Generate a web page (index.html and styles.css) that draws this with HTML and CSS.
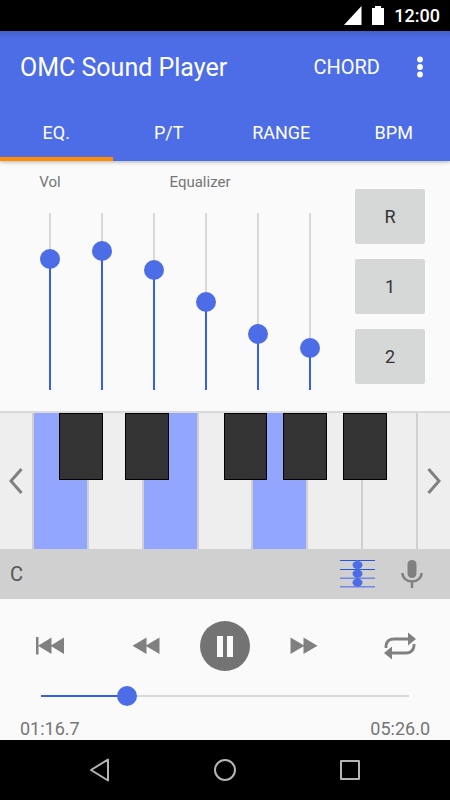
FILE: index.html
```html
<!DOCTYPE html>
<html lang="en">
<head>
<meta charset="utf-8">
<meta name="viewport" content="width=device-width, initial-scale=1">
<title>OMC Sound Player</title>
<link rel="stylesheet" href="styles.css">
</head>
<body>
<div class="status">
  <svg width="18" height="20" viewBox="0 0 18 20" aria-hidden="true"><path d="M17.500 1v19H0z" fill="#fff"/></svg>
  <svg width="12" height="20" viewBox="0 0 12 20" aria-hidden="true"><path d="M3 1h6v2h3v17H0V3h3z" fill="#fff"/></svg>
  <time>12:00</time>
</div>
<header class="app-bar">
  <div class="toolbar">
    <h1>OMC Sound Player</h1>
    <button class="chord" type="button">CHORD</button>
    <button class="more" type="button" aria-label="More options">
      <svg width="8" height="22" viewBox="0 0 8 22"><g fill="#fff"><circle cx="4" cy="3.500" r="2.900"/><circle cx="4" cy="11" r="2.900"/><circle cx="4" cy="18.500" r="2.900"/></g></svg>
    </button>
  </div>
  <nav class="tabs">
    <button class="tab active" type="button">EQ.</button>
    <button class="tab" type="button">P/T</button>
    <button class="tab" type="button">RANGE</button>
    <button class="tab" type="button">BPM</button>
  </nav>
</header>
<main>
  <section class="equalizer">
    <div class="mixer">
      <label class="vol-label" for="vol">Vol</label>
      <span class="eq-label" id="eq">Equalizer</span>
      <input class="range vertical" id="vol" type="range" min="0" max="1000" value="743" style="--fill:74.3%">
      <input class="range vertical" aria-label="Equalizer band 1" type="range" min="0" max="1000" value="788" style="--fill:78.8%">
      <input class="range vertical" aria-label="Equalizer band 2" type="range" min="0" max="1000" value="678" style="--fill:67.8%">
      <input class="range vertical" aria-label="Equalizer band 3" type="range" min="0" max="1000" value="498" style="--fill:49.8%">
      <input class="range vertical" aria-label="Equalizer band 4" type="range" min="0" max="1000" value="314" style="--fill:31.4%">
      <input class="range vertical" aria-label="Equalizer band 5" type="range" min="0" max="1000" value="237" style="--fill:23.7%">
    </div>
    <div class="presets">
      <button type="button">R</button>
      <button type="button">1</button>
      <button type="button">2</button>
    </div>
  </section>
  <section class="keyboard">
    <button class="shift" type="button" aria-label="Lower octave">
      <svg width="16" height="28" viewBox="0 0 16 28"><path d="M13.500 2L3 14l10.500 12" fill="none" stroke="#808080" stroke-width="3"/></svg>
    </button>
    <div class="keys">
      <button class="white on" type="button" aria-label="C"></button>
      <button class="white" type="button" aria-label="D"></button>
      <button class="white on" type="button" aria-label="E"></button>
      <button class="white" type="button" aria-label="F"></button>
      <button class="white on" type="button" aria-label="G"></button>
      <button class="white" type="button" aria-label="A"></button>
      <button class="white" type="button" aria-label="B"></button>
      <button class="black c-sharp" type="button" aria-label="C sharp"></button>
      <button class="black d-sharp" type="button" aria-label="D sharp"></button>
      <button class="black f-sharp" type="button" aria-label="F sharp"></button>
      <button class="black g-sharp" type="button" aria-label="G sharp"></button>
      <button class="black a-sharp" type="button" aria-label="A sharp"></button>
    </div>
    <button class="shift next" type="button" aria-label="Higher octave">
      <svg width="16" height="28" viewBox="0 0 16 28"><path d="M2.500 2L13 14 2.500 26" fill="none" stroke="#808080" stroke-width="3"/></svg>
    </button>
  </section>
  <section class="chord-bar">
    <span class="chord-name">C</span>
    <button type="button" aria-label="Show chord notes">
      <svg width="35" height="30" viewBox="0 0 35 30"><g fill="#2456e0"><path d="M0 1h35v1H0zM0 10h35v1H0z"/><path d="M0 18.500h35v1.500H0zM0 27h35v1.500H0z" fill="#6f86ea"/></g><g fill="#4d6de6"><path d="M16.500 1h2v27h-2z"/><ellipse cx="17.500" cy="6" rx="5" ry="4"/><ellipse cx="17.500" cy="14.700" rx="5" ry="4"/><ellipse cx="17.500" cy="23.500" rx="5" ry="4"/></g></svg>
    </button>
    <button type="button" aria-label="Microphone">
      <svg width="22" height="30" viewBox="0 0 22 30"><rect x="6.500" y="1" width="9" height="18" rx="4.500" fill="#808080"/><path d="M1.500 14c0 5 4 8.500 9.500 8.500s9.500-3.500 9.500-8.500M11 22.500V29" fill="none" stroke="#808080" stroke-width="2.500"/></svg>
    </button>
  </section>
  <section class="transport">
    <div class="controls">
      <button type="button" aria-label="Previous track">
        <svg width="28" height="18" viewBox="0 0 28 18"><path d="M0 0h2.500v17.500H0zM15.500.5v16.500L2 8.700zM28 .5v16.500L14.500 8.700z" fill="#808080"/></svg>
      </button>
      <div class="play-group">
        <button type="button" aria-label="Rewind">
          <svg width="28" height="18" viewBox="0 0 28 18"><path d="M14.500.5v16.500L.5 8.700zM27.500.5v16.500L13.500 8.700z" fill="#808080"/></svg>
        </button>
        <button type="button" aria-label="Pause">
          <svg width="50" height="50" viewBox="0 0 50 50"><circle cx="25" cy="25" r="25" fill="#737373"/><path d="M17 15h6v21h-6zM27 15h6v21h-6z" fill="#fafafa"/></svg>
        </button>
        <button type="button" aria-label="Fast forward">
          <svg width="28" height="18" viewBox="0 0 28 18"><path d="M.5.5v16.500L14.500 8.700zM13.500.5v16.500L27.500 8.700z" fill="#808080"/></svg>
        </button>
      </div>
      <button type="button" aria-label="Repeat">
        <svg width="32" height="28" viewBox="0 0 32 28"><g fill="none" stroke="#808080" stroke-width="2.800"><path d="M2 16v-2.500Q3 7 10 7h15"/><path d="M30 12V14q-1 7-8 7H7"/></g><path d="M24 .5L32 7l-8 6.500zM8 14.500v13L0 21z" fill="#808080"/></svg>
      </button>
    </div>
    <input class="range seek" type="range" min="0" max="1000" value="234" aria-label="Playback position" style="--fill:23.4%">
    <div class="times"><time>01:16.7</time><time>05:26.0</time></div>
  </section>
</main>
<footer class="system-nav">
  <button type="button" aria-label="Back"><svg width="24" height="24" viewBox="0 0 24 24"><path d="M20 1.500v21L3 12z" fill="none" stroke="#b5b5b5" stroke-width="2" stroke-linejoin="round"/></svg></button>
  <button type="button" aria-label="Home"><svg width="24" height="24" viewBox="0 0 24 24"><circle cx="12" cy="12" r="10" fill="none" stroke="#b5b5b5" stroke-width="2"/></svg></button>
  <button type="button" aria-label="Recent apps"><svg width="24" height="24" viewBox="0 0 24 24"><path d="M3 3h18v18H3z" fill="none" stroke="#b5b5b5" stroke-width="2" stroke-linejoin="round"/></svg></button>
</footer>
</body>
</html>
```
FILE: styles.css
```css
:root {
  --accent: #4d6de6;
  --track: #d9d9d9;
  --surface: #fafafa;
}

* {
  box-sizing: border-box;
}

body {
  margin: 0;
  min-height: 100vh;
  display: flex;
  flex-direction: column;
  background: var(--surface);
  font-family: Roboto, sans-serif;
  font-size: 18px;
  color: #757575;
}

button {
  display: flex;
  align-items: center;
  justify-content: center;
  margin: 0;
  padding: 0;
  border: 0;
  background: none;
  color: inherit;
  font: inherit;
}

svg {
  display: block;
}

.status {
  display: flex;
  align-items: center;
  justify-content: flex-end;
  gap: 10px;
  height: 31px;
  padding-right: 10px;
  background: #000;
  color: #fff;
  font-weight: 500;
}

.status svg {
  margin-bottom: 2px;
}

.app-bar {
  position: relative;
  background: linear-gradient(#445fc9, var(--accent) 8px);
  color: #fff;
  box-shadow: 0 1px 4px rgba(0, 0, 0, 0.3);
}

.toolbar {
  display: flex;
  align-items: center;
  height: 72px;
  padding: 0 16px 0 20px;
}

h1 {
  flex: 1;
  margin: 0;
  font-size: 25px;
  font-weight: 400;
}

.chord {
  font-size: 20px;
}

.more {
  width: 28px;
  height: 40px;
  margin-left: 26px;
}

.tabs {
  display: grid;
  grid-template-columns: repeat(4, 1fr);
}

.tab {
  height: 58px;
  border: solid transparent;
  border-width: 4px 0;
}

.tab.active {
  border-bottom-color: #ff8c00;
}

main {
  flex: 1;
}

.equalizer {
  display: flex;
  gap: 19px;
  padding: 11px 25px 11px 24px;
}

.mixer {
  flex: 1;
  display: grid;
  grid-template-columns: repeat(6, 1fr);
  row-gap: 11px;
  justify-items: center;
  font-size: 15px;
  line-height: 20px;
}

.eq-label {
  grid-column: 2 / -1;
  padding-right: 12px;
}

.range {
  appearance: none;
  margin: 0;
  background-color: transparent;
  background-repeat: no-repeat;
  background-position: center;
}

.range::-webkit-slider-thumb {
  appearance: none;
  width: 20px;
  height: 20px;
  border: 0;
  border-radius: 50%;
  background: var(--accent);
}

.vertical {
  writing-mode: vertical-lr;
  direction: rtl;
  width: 20px;
  height: 197px;
  background-image: linear-gradient(to top, #3560e6 var(--fill), var(--track) 0);
  background-size: 2px calc(100% - 20px);
}

.presets {
  display: flex;
  flex-direction: column;
  gap: 15px;
  width: 70px;
  padding-top: 17px;
}

.presets button {
  height: 55px;
  border-radius: 2px;
  background: #d6d7d7;
  color: #333;
}

.keyboard {
  display: flex;
  height: 138px;
  border-top: 2px solid #dadada;
  background: #eee;
}

.shift {
  width: 32px;
}

.next {
  width: 34px;
  border-left: 2px solid #d0d0d0;
}

.keys {
  position: relative;
  flex: 1;
  display: flex;
}

.white {
  flex: 1;
  border-left: 2px solid #d0d0d0;
}

.on {
  background: #92a6ff;
}

.black {
  position: absolute;
  top: 0;
  width: 11.4%;
  height: 67px;
  border: 1px solid #000;
  background: #333;
}

.c-sharp { left: 7%; }
.d-sharp { left: 24.2%; }
.f-sharp { left: 49.9%; }
.g-sharp { left: 65.4%; }
.a-sharp { left: 81%; }

.chord-bar {
  display: flex;
  align-items: center;
  gap: 26px;
  height: 50px;
  padding: 0 27px 0 10px;
  background: #d0d0d0;
}

.chord-name {
  flex: 1;
  color: #555;
  font-size: 20px;
}

.transport {
  padding: 22px 20px 0;
}

.controls {
  display: flex;
  justify-content: space-between;
}

.controls button {
  width: 60px;
  height: 50px;
}

.play-group {
  display: flex;
  gap: 19px;
}

.seek {
  display: block;
  width: calc(100% - 22px);
  height: 20px;
  margin: 15px 11px 13px;
  background-image: linear-gradient(to right, #3560e6 var(--fill), var(--track) 0);
  background-size: calc(100% - 20px) 2px;
}

.times {
  display: flex;
  justify-content: space-between;
  line-height: 20px;
}

.system-nav {
  display: flex;
  justify-content: space-between;
  height: 60px;
  padding: 0 75px;
  background: #000;
}

.system-nav button {
  width: 50px;
}
```
